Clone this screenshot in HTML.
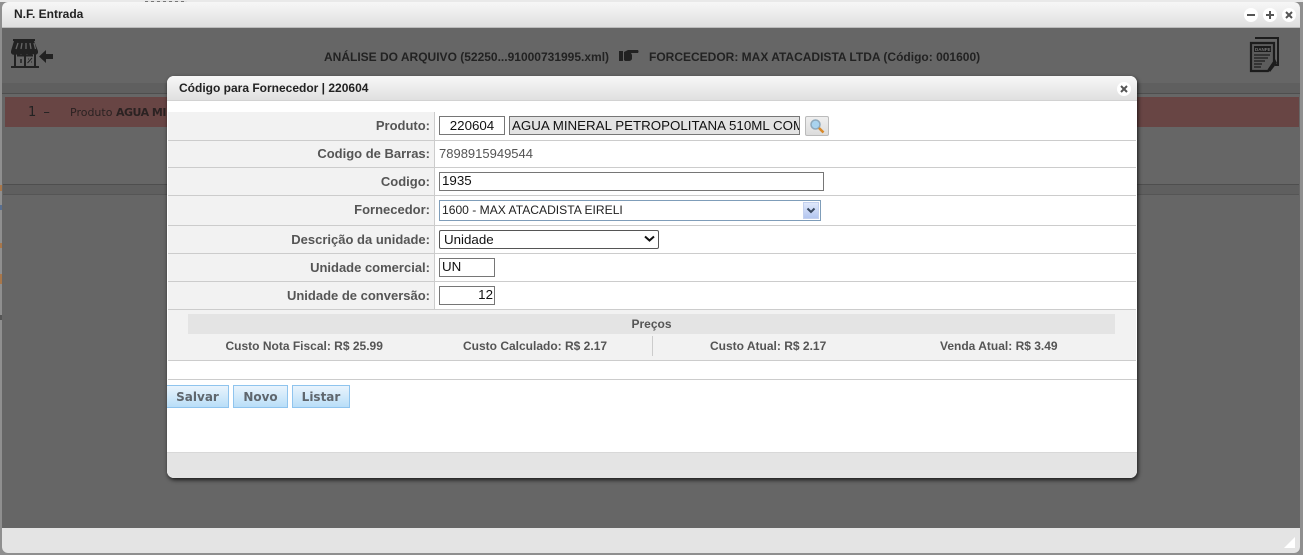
<!DOCTYPE html>
<html lang="pt"><head><meta charset="utf-8"><title>N.F. Entrada</title>
<style>
html,body{margin:0;padding:0;width:1303px;height:555px;overflow:hidden;background:#8f8f8f;font-family:"Liberation Sans",Arial,sans-serif}
div,span,input{box-sizing:border-box}
.a{position:absolute}
.t{position:absolute;white-space:nowrap}
.ln{position:absolute;left:168px;width:968px;height:1px;background:#ccc}
.lab{position:absolute;left:168px;width:262px;text-align:right;font:bold 13px/16px "Liberation Sans",sans-serif;color:#555;white-space:nowrap}
.box{position:absolute;background:#fff;border:1px solid #767676;font:13.33px/16px "Liberation Sans",sans-serif;color:#111;white-space:nowrap;overflow:hidden}
.btn{position:absolute;top:385px;height:23px;border:1px solid #8fc4ee;background:linear-gradient(#e9f4fc,#b9def8);font:bold 12px/22px "DejaVu Sans",sans-serif;color:#5f666d;text-align:center}
.wb{position:absolute;width:14px;height:14px;border-radius:50%;background:#fff;text-align:center}
.price{position:absolute;top:338px;font:bold 12px/16px "Liberation Sans",sans-serif;color:#555;white-space:nowrap}
</style></head><body>
<div class="a" style="left:0;top:0;width:1303px;height:2px;background:#e9e9e9"></div>
<div class="a" style="left:145px;top:1px;width:42px;height:1px;background:repeating-linear-gradient(90deg,#777 0 3px,#ddd 3px 6px)"></div>
<div class="a" style="left:0;top:185px;width:2px;height:6px;background:#a9774a"></div>
<div class="a" style="left:0;top:205px;width:2px;height:5px;background:#596f90"></div>
<div class="a" style="left:0;top:243px;width:2px;height:5px;background:#a9774a"></div>
<div class="a" style="left:0;top:274px;width:2px;height:10px;background:#a9774a"></div>
<div class="a" style="left:0;top:315px;width:2px;height:5px;background:#555"></div>

<!-- main window -->
<div class="a" style="left:2px;top:2px;width:1298px;height:551px;border-radius:6px;overflow:hidden;background:#666">
  <div class="a" style="left:0;top:0;width:1298px;height:26px;background:linear-gradient(#f7f7f7,#dfdfdf);border-bottom:1px solid #bbb"></div>
  <div class="a" style="left:0;top:526px;width:1298px;height:25px;background:#e4e4e4"></div>
  <svg class="a" style="left:1282px;top:535px" width="11" height="11"><path d="M11 0V11H0Z" fill="#fff"/></svg>
</div>
<div class="t" style="left:14px;top:6px;font:bold 12px/16px 'Liberation Sans',sans-serif;color:#222">N.F. Entrada</div>
<div class="wb" style="left:1244px;top:8px"><span class="a" style="left:3px;top:6px;width:8px;height:2px;background:#555"></span></div>
<div class="wb" style="left:1263px;top:8px"><span class="a" style="left:3px;top:6px;width:8px;height:2px;background:#555"></span><span class="a" style="left:6px;top:3px;width:2px;height:8px;background:#555"></span></div>
<div class="wb" style="left:1282px;top:8px"><svg class="a" style="left:3px;top:3px" width="8" height="8"><path d="M1 1L7 7M7 1L1 7" stroke="#555" stroke-width="2"/></svg></div>

<!-- background content -->
<div class="a" style="left:2px;top:83px;width:1298px;height:11px;background:#5f5f5f;border-bottom:1px solid #4e4e4e"></div>
<div class="a" style="left:5px;top:97px;width:1294px;height:30px;background:#684544"></div>
<div class="a" style="left:3px;top:184px;width:1296px;height:1px;background:#4e4e4e"></div>
<div class="a" style="left:3px;top:185px;width:1296px;height:10px;background:#5f5f5f;border-bottom:1px solid #555"></div>
<div class="t" style="left:28px;top:104px;font:13px/17px 'DejaVu Sans',sans-serif;color:#222">1 <span style="margin-left:3px">–</span></div>
<div class="t" style="left:70px;top:105px;font:11px/16px 'DejaVu Sans',sans-serif;color:#2b2222">Produto <b style="letter-spacing:-.5px">AGUA MINERAL</b></div>
<svg class="a" style="left:10px;top:39px" width="45" height="31" viewBox="0 0 45 31">
 <path d="M3 0H25V2H3Z" fill="#222"/>
 <path d="M4 2H24L28 12H1Z" fill="#222"/>
 <path d="M8 4L6 10M12 4L11 10M16 4V10M20 4L21 10M24 4L25.500 10" stroke="#666" stroke-width="1.300"/>
 <path d="M1 12H28V14Q26 17 23 15Q20 17 17 15Q14 17 11 15Q8 17 5.500 15Q3 17 1 14Z" fill="#222"/>
 <path d="M5 15V27M25 15V27M15 16V27M7 16.500H23" stroke="#222" stroke-width="2" fill="none"/>
 <path d="M1 27H29V29H1Z" fill="#222"/>
 <path d="M17.500 24L22 19M18 20H19M21 23H22" stroke="#222"/><path d="M11 20V24" stroke="#222" stroke-width="1.500"/>
 <path d="M29 17.500L36 11V15H43V20H36V24Z" fill="#222"/>
</svg>
<div class="t" style="left:324px;top:49px;font:bold 12px/16px 'Liberation Sans',sans-serif;color:#222">ANÁLISE DO ARQUIVO (52250...91000731995.xml)</div>
<svg class="a" style="left:618px;top:48px" width="21" height="15" viewBox="0 0 21 15"><path d="M1 3H5V13H1ZM6 4L10 2H20Q21 3.500 20 5H13L14 7V11Q13 13 11 13H7L6 12Z" fill="#222"/></svg>
<div class="t" style="left:649px;top:49px;font:bold 12px/16px 'Liberation Sans',sans-serif;color:#222">FORCECEDOR: MAX ATACADISTA LTDA (Código: 001600)</div>
<svg class="a" style="left:1249px;top:36px" width="32" height="37" viewBox="0 0 32 37">
 <path d="M6 2H29V29H26" fill="none" stroke="#1c1c1c" stroke-width="2"/>
 <path d="M2 7H25V26L19 35H2Z" fill="#5c5c5c" stroke="#1c1c1c" stroke-width="2.200"/>
 <rect x="5" y="10" width="17" height="6" fill="#1c1c1c"/>
 <path d="M5 19H21M5 22H19M5 25H16M5 28H13M5 31H12" stroke="#1c1c1c" stroke-width="1.200"/>
 <path d="M26 23L19 33L21 36L28 27Z" fill="#1c1c1c"/>
 <text x="6" y="15" font-family="Liberation Sans" font-size="4.500" font-weight="bold" fill="#777">DANFE</text>
</svg>

<!-- dialog -->
<div class="a" style="left:167px;top:76px;width:970px;height:402px;border-radius:7px;background:#fff;box-shadow:1px 2px 4px rgba(0,0,0,.75);overflow:hidden">
  <div class="a" style="left:0;top:0;width:970px;height:25px;background:linear-gradient(#f8f8f8,#e0e0e0);border-bottom:1px solid #d2d2d2"></div>
  <div class="a" style="left:0;top:376px;width:970px;height:26px;background:#e4e4e4;border-top:1px solid #d8d8d8"></div>
</div>
<div class="t" style="left:179px;top:80px;font:bold 12px/16px 'Liberation Sans',sans-serif;color:#222">Código para Fornecedor | 220604</div>
<div class="wb" style="left:1117px;top:82px"><svg class="a" style="left:3px;top:3px" width="8" height="8"><path d="M1 1L7 7M7 1L1 7" stroke="#555" stroke-width="2"/></svg></div>

<!-- form -->
<div class="a" style="left:168px;top:112px;width:266px;height:197px;background:#f2f2f2"></div>
<div class="a" style="left:434px;top:112px;width:1px;height:197px;background:#ccc"></div>
<div class="ln" style="top:140px"></div><div class="ln" style="top:167px"></div><div class="ln" style="top:195px"></div><div class="ln" style="top:225px"></div><div class="ln" style="top:253px"></div><div class="ln" style="top:281px"></div><div class="ln" style="top:309px"></div>

<div class="lab" style="top:118px">Produto:</div>
<div class="lab" style="top:146px">Codigo de Barras:</div>
<div class="lab" style="top:174px">Codigo:</div>
<div class="lab" style="top:202px">Fornecedor:</div>
<div class="lab" style="top:232px">Descrição da unidade:</div>
<div class="lab" style="top:260px">Unidade comercial:</div>
<div class="lab" style="top:288px">Unidade de conversão:</div>

<div class="box" style="left:439px;top:116px;width:66px;height:19px;text-align:center;line-height:17px">220604</div>
<div class="box" style="left:509px;top:116px;width:291px;height:19px;background:#e3e3e3;padding-left:2px;line-height:17px">AGUA MINERAL PETROPOLITANA 510ML COM</div>
<div class="a" style="left:805px;top:116px;width:24px;height:20px;background:linear-gradient(#efefef,#dcdcdc);border:1px solid #bbb;border-radius:2px"></div>
<svg class="a" style="left:809px;top:118px" width="17" height="16" viewBox="0 0 17 16"><circle cx="6.500" cy="6.500" r="4.500" fill="#a9d3ee" stroke="#8fa9bb" stroke-width="1.500"/><path d="M10 10L14.500 14.500" stroke="#d98a2b" stroke-width="2.600"/></svg>
<div class="t" style="left:439px;top:146px;font:13px/16px 'Liberation Sans',sans-serif;color:#555">7898915949544</div>
<div class="box" style="left:439px;top:172px;width:385px;height:19px;padding-left:2px">1935</div>
<div class="box" style="left:439px;top:200px;width:382px;height:21px;border-color:#7f9db9;font-size:12.1px;line-height:19px;padding-left:2px;color:#222">1600 - MAX ATACADISTA EIRELI</div>
<div class="a" style="left:803px;top:202px;width:16px;height:17px;background:linear-gradient(#dfe8fb,#b4c6f0);border:1px solid #c3d0ee"></div>
<svg class="a" style="left:806px;top:207px" width="10" height="8"><path d="M1.500 1.500L5 5L8.500 1.500" fill="none" stroke="#39485f" stroke-width="2"/></svg>
<div class="box" style="left:439px;top:230px;width:220px;height:19px;border-radius:2px;border-color:#555;padding-left:4px;line-height:17px">Unidade</div>
<svg class="a" style="left:644px;top:235px" width="11" height="8"><path d="M1 1.500L5.500 5.500L10 1.500" fill="none" stroke="#111" stroke-width="2"/></svg>
<div class="box" style="left:439px;top:258px;width:56px;height:19px;padding-left:2px">UN</div>
<div class="box" style="left:439px;top:286px;width:56px;height:19px;text-align:right;padding-right:1px">12</div>

<!-- prices -->
<div class="a" style="left:168px;top:310px;width:968px;height:50px;background:#f2f2f2"></div>
<div class="a" style="left:188px;top:314px;width:927px;height:20px;background:#e4e4e4"></div>
<div class="t" style="left:188px;top:316px;width:927px;text-align:center;font:bold 12px/16px 'Liberation Sans',sans-serif;color:#555">Preços</div>
<div class="a" style="left:652px;top:336px;width:1px;height:20px;background:#ccc"></div>
<div class="price" style="left:225.500px">Custo Nota Fiscal: R$ 25.99</div>
<div class="price" style="left:463px">Custo Calculado: R$ 2.17</div>
<div class="price" style="left:710px">Custo Atual: R$ 2.17</div>
<div class="price" style="left:940px">Venda Atual: R$ 3.49</div>
<div class="ln" style="top:360px;height:1px"></div>
<div class="ln" style="top:379px;width:969px"></div>

<div class="btn" style="left:167px;width:62px;border-left:0">Salvar</div>
<div class="btn" style="left:233px;width:55px">Novo</div>
<div class="btn" style="left:292px;width:58px">Listar</div>
</body></html>
